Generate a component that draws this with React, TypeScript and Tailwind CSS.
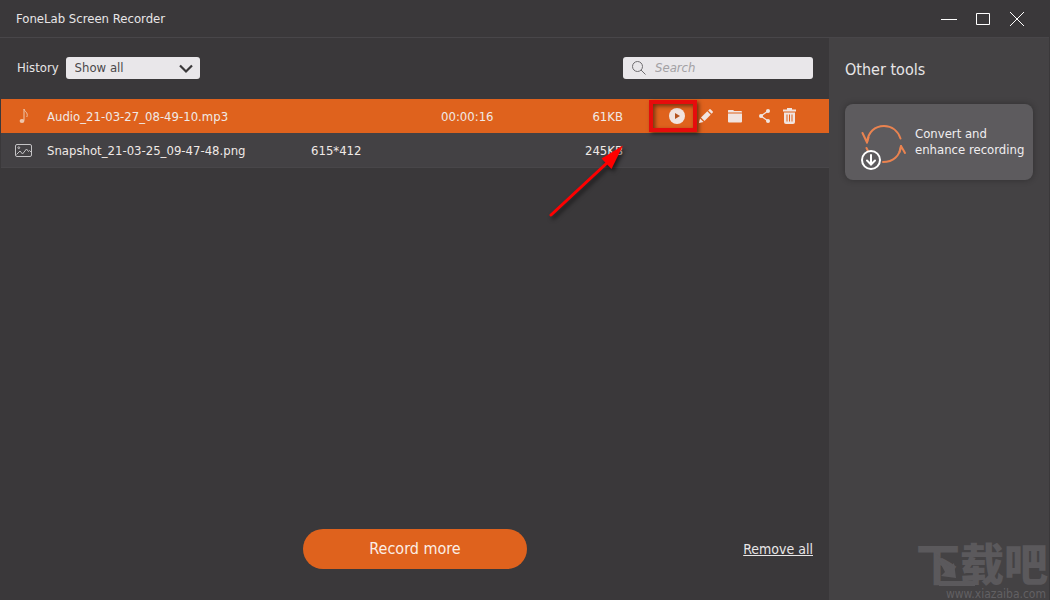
const recordings = [
  { name: 'Audio_21-03-27_08-49-10.mp3', kind: 'audio', resolution: '', duration: '00:00:16', size: '61KB' },
  { name: 'Snapshot_21-03-25_09-47-48.png', kind: 'image', resolution: '615*412', duration: '', size: '245KB' },
];

function NoteIcon() {
  return (
    <svg className="h-4 w-4 ml-px" viewBox="0 0 16 16" fill="none">
      <path d="M8 12.500V1c.3 2.500 4.600 3.500 2.800 8" stroke="#eec6ac" strokeWidth="1" />
      <ellipse cx="6" cy="13" rx="2.400" ry="1.900" fill="#eec6ac" />
    </svg>
  );
}

function PictureIcon() {
  return (
    <svg className="h-4 w-4.5" viewBox="0 0 18 16" fill="none" stroke="#c4c3c5" strokeWidth="1">
      <rect x="0.500" y="2.500" width="16" height="12" rx="1.500" />
      <circle cx="3.800" cy="5.700" r="0.900" />
      <path d="M1.500 12.500l3.500-3.500 2.500 3 4-5 2 2.500 1-1 2 2" />
    </svg>
  );
}

function PlayIcon() {
  return (
    <svg className="h-4 w-4" viewBox="0 0 16 16">
      <circle cx="8" cy="8" r="8" fill="#f1e4e0" />
      <path d="M6 5v6l5-3z" fill="#b4521e" />
    </svg>
  );
}

function PencilIcon() {
  return (
    <svg className="h-4 w-4" viewBox="0 0 16 16" fill="#f1e4e0">
      <path d="M1 15l1-4.500L5.500 14z" />
      <path d="M3 9.500l6.300-6.200 3.400 3.400L6.500 13z" />
      <path d="M10.200 2.400l1-1q.8-.8 1.600 0l1.800 1.800q.8.8 0 1.600l-1 1z" />
    </svg>
  );
}

function FolderIcon() {
  return (
    <svg className="h-4 w-4" viewBox="0 0 16 16" fill="#f1e4e0">
      <path d="M1 4.500V2.500q0-.5.500-.5H6l1.300 1H14q1 0 1 1v.5z" />
      <path d="M1 5.500h14v8q0 1-1 1H2q-1 0-1-1z" />
    </svg>
  );
}

function ShareIcon() {
  return (
    <svg className="h-4 w-3.5" viewBox="0 0 14 16" fill="#f1e4e0">
      <path d="M12 3L5 8l7 5" fill="none" stroke="#f1e4e0" strokeWidth="1.200" />
      <circle cx="5" cy="8" r="2" />
      <circle cx="12" cy="3" r="2" />
      <circle cx="12" cy="13" r="2" />
    </svg>
  );
}

function TrashIcon() {
  return (
    <svg className="h-4 w-3.25" viewBox="0 0 13 16" fill="#f1e4e0">
      <path d="M4 0h5v1.500h4v2H0v-2h4z" />
      <path d="M1 4.500h11V14q0 2-2 2H3q-2 0-2-2z" />
      <path d="M4 6.500v7M6.500 6.500v7M9 6.500v7" stroke="#df621d" strokeWidth="1" />
    </svg>
  );
}

function ConvertIcon() {
  return (
    <svg className="h-14 w-12 shrink-0" viewBox="0 0 48 56" fill="none" strokeLinecap="round">
      <g stroke="#ea8350" strokeWidth="2" strokeLinejoin="round">
        <path d="M1.500 19l4.500 9.500C7 18 14 12 23 12c8 0 14 5 16.500 12.500" />
        <path d="M44 39l-4-7C39 42 32 48 22 48" />
        <path d="M5.500 34l1.500 3" />
        <path d="M6 28.500l1.500-5M38.500 38l1.500-6" />
      </g>
      <circle cx="10" cy="46" r="9" stroke="#fff" strokeWidth="2" />
      <path d="M10 41v9M6 46.500l4 4 4-4" stroke="#fff" strokeWidth="2" />
    </svg>
  );
}

const actions = [
  { label: 'Play', icon: <PlayIcon /> },
  { label: 'Edit', icon: <PencilIcon /> },
  { label: 'Open folder', icon: <FolderIcon /> },
  { label: 'Share', icon: <ShareIcon /> },
  { label: 'Delete', icon: <TrashIcon /> },
];

function TitleBar() {
  return (
    <header className="flex items-center justify-between h-9.5 pl-4 pr-6 border-b border-[#484649]">
      <h1 className="text-[13px] text-[#e8e6e7]">FoneLab Screen Recorder</h1>
      <div className="flex items-center gap-4.5">
        <button aria-label="Minimize">
          <svg className="h-4 w-4" viewBox="0 0 16 16"><path d="M0 8.500h16" stroke="#fff" /></svg>
        </button>
        <button aria-label="Maximize">
          <svg className="h-4 w-4" viewBox="0 0 16 16"><path d="M1.500 2.500h13v11h-13z" fill="none" stroke="#fff" /></svg>
        </button>
        <button aria-label="Close">
          <svg className="h-4 w-4" viewBox="0 0 16 16"><path d="M1 1l14 14M15 1L1 15" stroke="#fff" /></svg>
        </button>
      </div>
    </header>
  );
}

function RecordingTable() {
  return (
    <table className="mt-px w-full table-fixed border-collapse text-[13px] text-[#f0e9e6]">
      <colgroup>
        <col className="w-11.5" />
        <col />
        <col className="w-32.5" />
        <col className="w-32" />
        <col className="w-13.5" />
        <col className="w-51.5" />
      </colgroup>
      <tbody>
        {recordings.map((item) => (
          <tr
            key={item.name}
            className={item.kind === 'audio' ? 'h-8.5 bg-[#df621d]' : 'h-8.5 bg-[#434144] border-b border-[#484649]'}
          >
            <td className="pl-3.5">{item.kind === 'audio' ? <NoteIcon /> : <PictureIcon />}</td>
            <td className="pt-px">{item.name}</td>
            <td className="pt-px">{item.resolution}</td>
            <td className="pt-px">{item.duration}</td>
            <td className="pt-px text-right">
              <span className="relative">
                {item.size}
                {item.kind === 'image' && (
                  <svg className="absolute -right-1 -top-2 h-22 w-20 drop-shadow-[2px_3px_2px_rgba(0,0,0,0.6)]" viewBox="0 0 80 88">
                    <path d="M4 80L61 27" stroke="#f00" strokeWidth="3" strokeLinecap="round" />
                    <path d="M76 10.500L54.500 23.500 64.500 34z" fill="#f00" />
                  </svg>
                )}
              </span>
            </td>
            <td className="pl-11.5">
              {item.kind === 'audio' && (
                <div className="flex items-center gap-3.25">
                  {actions.map((action) => (
                    <button key={action.label} aria-label={action.label} className="relative">
                      {action.icon}
                      {action.label === 'Play' && (
                        <span className="absolute -left-5 -top-2 h-8 w-12 border-4 border-[#e60c0c] shadow-[2px_2px_4px_rgba(0,0,0,0.5),inset_2px_2px_4px_rgba(0,0,0,0.5)]" />
                      )}
                    </button>
                  ))}
                </div>
              )}
            </td>
          </tr>
        ))}
      </tbody>
    </table>
  );
}

function SiteMark() {
  return (
    <div className="absolute bottom-0 right-0.5 flex flex-col items-end pointer-events-none text-[#5b595c]">
      <div className="relative">
        <span className="block text-[44px] font-black leading-11">下载吧</span>
        <svg className="absolute left-0 top-0 h-11 w-16" viewBox="0 0 64 44" fill="#5b595c">
          <path d="M19 9l15 14 4-4 2 15-15-2 4-4z" />
          <path d="M23 37h36v5H23z" />
        </svg>
      </div>
      <span className="pr-0.5 text-xs leading-3 text-[#626063]">www.xiazaiba.com</span>
    </div>
  );
}

export default function App() {
  return (
    <div className="relative flex flex-col min-h-screen pr-px bg-[#3a383a] font-['DejaVu_Sans_Condensed','Noto_Sans_CJK_SC',sans-serif]">
      <TitleBar />
      <div className="flex flex-1">
        <main className="flex flex-1 flex-col pl-px">
          <div className="flex items-center justify-between h-15 px-4">
            <div className="flex items-center gap-1.75">
              <label htmlFor="history" className="text-[13px] text-[#e8e6e7]">History</label>
              <div className="relative">
                <select
                  id="history"
                  className="block appearance-none h-5.5 w-33.5 pl-2.25 rounded-[3px] bg-[#e9e7ea] text-[13px] text-[#4a484b]"
                >
                  <option>Show all</option>
                </select>
                <svg className="absolute right-1.5 top-1 h-4 w-4 pointer-events-none" viewBox="0 0 16 16" fill="none">
                  <path d="M2 4.500l6 6 6-6" stroke="#3a383a" strokeWidth="2.200" />
                </svg>
              </div>
            </div>
            <label className="flex items-center gap-2 h-5.5 w-47.5 pl-2 rounded-[3px] bg-[#e9e7ea]">
              <svg className="h-4 w-4 shrink-0" viewBox="0 0 16 16" fill="none" stroke="#6f6d70">
                <circle cx="6.500" cy="6.500" r="5" />
                <path d="M10 10l4.500 4.500" />
              </svg>
              <input
                type="text"
                aria-label="Search"
                placeholder="Search"
                className="min-w-0 flex-1 text-[13px] italic outline-none placeholder:text-[#a3a1a4]"
              />
            </label>
          </div>
          <RecordingTable />
          <div className="mt-auto grid grid-cols-[1fr_auto_1fr] items-center pb-7.75 px-4">
            <button className="col-start-2 h-10 w-56 rounded-full bg-[#df621d] text-base text-[#fbeee6]">Record more</button>
            <a href="#" className="justify-self-end text-sm text-[#e8e6e7] underline">Remove all</a>
          </div>
        </main>
        <aside className="w-55 shrink-0 bg-[#444244] px-4 pt-5">
          <h2 className="text-base text-[#e8e6e7]">Other tools</h2>
          <button className="flex items-center mt-5.5 h-19 w-full gap-1.5 pl-4 rounded-lg bg-[#5d5b5e] text-left text-[13px] leading-4 text-[#f0eef0] shadow-[0_0_6px_rgba(0,0,0,0.3)]">
            <ConvertIcon />
            <span>Convert and<br />enhance recording</span>
          </button>
        </aside>
      </div>
      <SiteMark />
    </div>
  );
}
